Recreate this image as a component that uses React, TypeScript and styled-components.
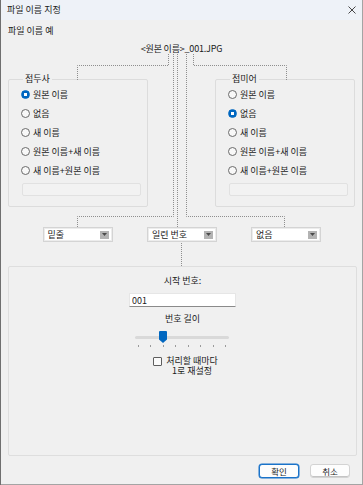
import styled, { createGlobalStyle } from 'styled-components';

const GlobalStyle = createGlobalStyle`
  html, body {
    margin: 0;
    padding: 0;
    background: #5a6b7d;
  }
  * {
    box-sizing: border-box;
  }
`;

const NAME_OPTIONS = ['원본 이름', '없음', '새 이름', '원본 이름+새 이름', '새 이름+원본 이름'];

interface RadioGroupProps {
  legend: string;
  selected: number;
}

function RadioGroup({ legend, selected }: RadioGroupProps) {
  return (
    <Group>
      <Legend>{legend}</Legend>
      {NAME_OPTIONS.map((label, i) => (
        <RadioRow key={label}>
          <Radio $checked={i === selected} />
          <span>{label}</span>
        </RadioRow>
      ))}
      <DisabledInput />
    </Group>
  );
}

function ComboBox({ value }: { value: string }) {
  return (
    <Combo>
      <span>{value}</span>
      <ComboArrow>
        <svg width="5" height="3" viewBox="0 0 5 3">
          <path d="M0 0 H5 L2.5 3 Z" fill="#4a4a4a" />
        </svg>
      </ComboArrow>
    </Combo>
  );
}

function Connectors() {
  const line = { fill: 'none', stroke: '#8e8e8e', strokeWidth: 1, strokeDasharray: '1 1' };
  return (
    <ConnectorLayer width="363" height="485" viewBox="0 0 363 485">
      <path d="M168.5 54 V65.5 H77.5 V80" {...line} />
      <path d="M173.5 54 V216.5 H77.5 V227" {...line} />
      <path d="M177.5 54 V227" {...line} />
      <path d="M186.5 54 V216.5 H284.5 V227" {...line} />
      <path d="M193.5 54 V65.5 H286.5 V80" {...line} />
      <path d="M181.5 243 V266" {...line} />
    </ConnectorLayer>
  );
}

export default function App() {
  const ticks = Array.from({ length: 8 });

  return (
    <>
      <GlobalStyle />
      <Window>
        <TitleBar>
          <span>파일 이름 지정</span>
          <svg width="8" height="8" viewBox="0 0 8 8">
            <path d="M0.5 0.5 L7.5 7.5 M7.5 0.5 L0.5 7.5" stroke="#333" strokeWidth="0.9" />
          </svg>
        </TitleBar>
        <Body>
          <ExampleLabel>파일 이름 예</ExampleLabel>
          <ExampleName>&lt;원본 이름&gt;_001.JPG</ExampleName>
          <GroupsRow>
            <RadioGroup legend="접두사" selected={0} />
            <RadioGroup legend="접미어" selected={1} />
          </GroupsRow>
          <ComboRow>
            <ComboBox value="밑줄" />
            <ComboBox value="일련 번호" />
            <ComboBox value="없음" />
          </ComboRow>
          <Panel>
            <PanelLabel>시작 번호:</PanelLabel>
            <NumberInput value="001" readOnly />
            <PanelLabel $gap={6}>번호 길이</PanelLabel>
            <Slider>
              <Track>
                <Thumb>
                  <svg width="8" height="12" viewBox="0 0 8 12">
                    <path d="M1 0 H7 Q8 0 8 1 V8.5 L4 12 L0 8.5 V1 Q0 0 1 0 Z" fill="#0067c0" />
                  </svg>
                </Thumb>
              </Track>
              <Ticks>
                {ticks.map((_, i) => (
                  <Tick key={i} />
                ))}
              </Ticks>
            </Slider>
            <CheckRow>
              <CheckBox />
              <CheckText>
                <span>처리할 때마다</span>
                <span>1로 재설정</span>
              </CheckText>
            </CheckRow>
          </Panel>
          <Footer>
            <Button $primary>확인</Button>
            <Button>취소</Button>
          </Footer>
        </Body>
        <Connectors />
      </Window>
    </>
  );
}

const Window = styled.div`
  position: relative;
  width: 363px;
  height: 485px;

  display: flex;
  flex-direction: column;

  background: #f0f0f0;
  box-shadow: inset 1px 0 #6f6f6f, inset -1px 0 #a4a4a4, inset 0 -1px #a4a4a4;

  font-family: 'Noto Sans CJK KR', 'Noto Sans', sans-serif;
  font-size: 9px;
  line-height: 12px;
  color: #1b1b1b;
`;

const TitleBar = styled.div`
  height: 20px;

  display: flex;
  justify-content: space-between;
  align-items: center;

  padding: 0 7px;

  background: #eef2f8;
  box-shadow: inset 1px 0 #6f6f6f, inset -1px 0 #a4a4a4;
`;

const Body = styled.div`
  flex: 1;

  display: flex;
  flex-direction: column;

  padding: 0 8px;
`;

const ExampleLabel = styled.div`
  margin-top: 5px;
`;

const ExampleName = styled.div`
  margin-top: 6px;
  text-align: center;
  letter-spacing: -0.2px;
`;

const GroupsRow = styled.div`
  display: flex;
  justify-content: space-between;

  margin-top: 18px;
`;

const Group = styled.fieldset`
  width: 139px;
  height: 134px;

  margin: 0;
  padding: 0 6px 0 12px;

  display: flex;
  flex-direction: column;

  border: 1px solid #dcdcdc;
  border-radius: 2px;
`;

const Legend = styled.legend`
  padding: 0 2px;
  margin-left: 2px;
`;

const RadioRow = styled.div`
  height: 19px;

  display: flex;
  align-items: center;
  gap: 3px;
`;

const Radio = styled.span<{ $checked?: boolean }>`
  width: 9px;
  height: 9px;
  border-radius: 50%;

  border: 1px solid ${(p) => (p.$checked ? '#0067c0' : '#6a6a6a')};
  background: ${(p) =>
    p.$checked ? 'radial-gradient(circle, #ffffff 0 1.6px, #0067c0 2px)' : '#f8f8f8'};
`;

const DisabledInput = styled.div`
  width: 119px;
  height: 13px;

  margin: 3px 0 0 1px;

  background: #f2f2f2;
  border: 1px solid #e1e1e1;
  border-radius: 2px;
`;

const ComboRow = styled.div`
  display: grid;
  grid-template-columns: 139px 1fr 138px;
  justify-items: center;

  margin-top: 20px;
`;

const Combo = styled.div`
  width: 70px;
  height: 15px;

  display: flex;
  justify-content: space-between;
  align-items: center;

  padding: 0 3px 0 4px;

  background: #ffffff;
  border: 1px solid #d4d4d4;
  box-shadow: inset 0 0 0 1px #ececec;
`;

const ComboArrow = styled.span`
  width: 9px;
  height: 8px;

  display: flex;
  justify-content: center;
  align-items: center;

  background: #b3b3b3;
`;

const Panel = styled.div`
  height: 190px;

  display: flex;
  flex-direction: column;
  align-items: center;

  margin: 24px -2px 0 0;
  padding-top: 8px;

  border: 1px solid #dedede;
  border-radius: 2px;
`;

const PanelLabel = styled.div<{ $gap?: number }>`
  margin-top: ${(p) => p.$gap ?? 0}px;
`;

const NumberInput = styled.input`
  width: 107px;
  height: 14px;

  margin-top: 6px;
  padding: 0 2px;

  font: inherit;
  color: #1b1b1b;

  background: #ffffff;
  border: 1px solid #e6e6e6;
  border-bottom-color: #8a8a8a;
  border-radius: 1px;
  outline: none;
`;

const Slider = styled.div`
  width: 94px;

  margin-top: 11px;
  margin-left: -1px;
`;

const Track = styled.div`
  position: relative;
  height: 3px;

  background: #d9d9d9;
  border-radius: 2px;
`;

const Thumb = styled.span`
  position: absolute;
  left: 24px;
  top: -5px;

  display: flex;
`;

const Ticks = styled.div`
  display: flex;
  justify-content: space-between;

  margin-top: 6px;
  padding: 0 3px;
`;

const Tick = styled.span`
  width: 1px;
  height: 2px;

  background: #9a9a9a;
`;

const CheckRow = styled.div`
  display: flex;
  align-items: flex-start;
  gap: 4px;

  margin-top: 9px;
  margin-left: 6px;
`;

const CheckBox = styled.span`
  width: 9px;
  height: 9px;
  margin-top: 1px;

  background: #fafafa;
  border: 1px solid #5e5e5e;
  border-radius: 1px;
`;

const CheckText = styled.div`
  display: flex;
  flex-direction: column;
  align-items: center;

  line-height: 10px;
`;

const Footer = styled.div`
  display: flex;
  justify-content: flex-end;
  gap: 11px;

  margin-top: 8px;
  padding-right: 5px;
`;

const Button = styled.button<{ $primary?: boolean }>`
  width: 40px;
  height: 14px;

  padding: 0;

  font: inherit;
  font-size: 8.5px;
  line-height: 12px;
  color: #1b1b1b;

  background: #fdfdfd;
  border: 1px solid ${(p) => (p.$primary ? '#1a73c9' : '#d3d3d3')};
  box-shadow: ${(p) => (p.$primary ? '0 0 0 0.5px #1a73c9' : 'inset 0 -1px #c4c4c4')};
  border-radius: 3px;
`;

const ConnectorLayer = styled.svg`
  position: absolute;
  left: 0;
  top: 0;

  pointer-events: none;
`;
